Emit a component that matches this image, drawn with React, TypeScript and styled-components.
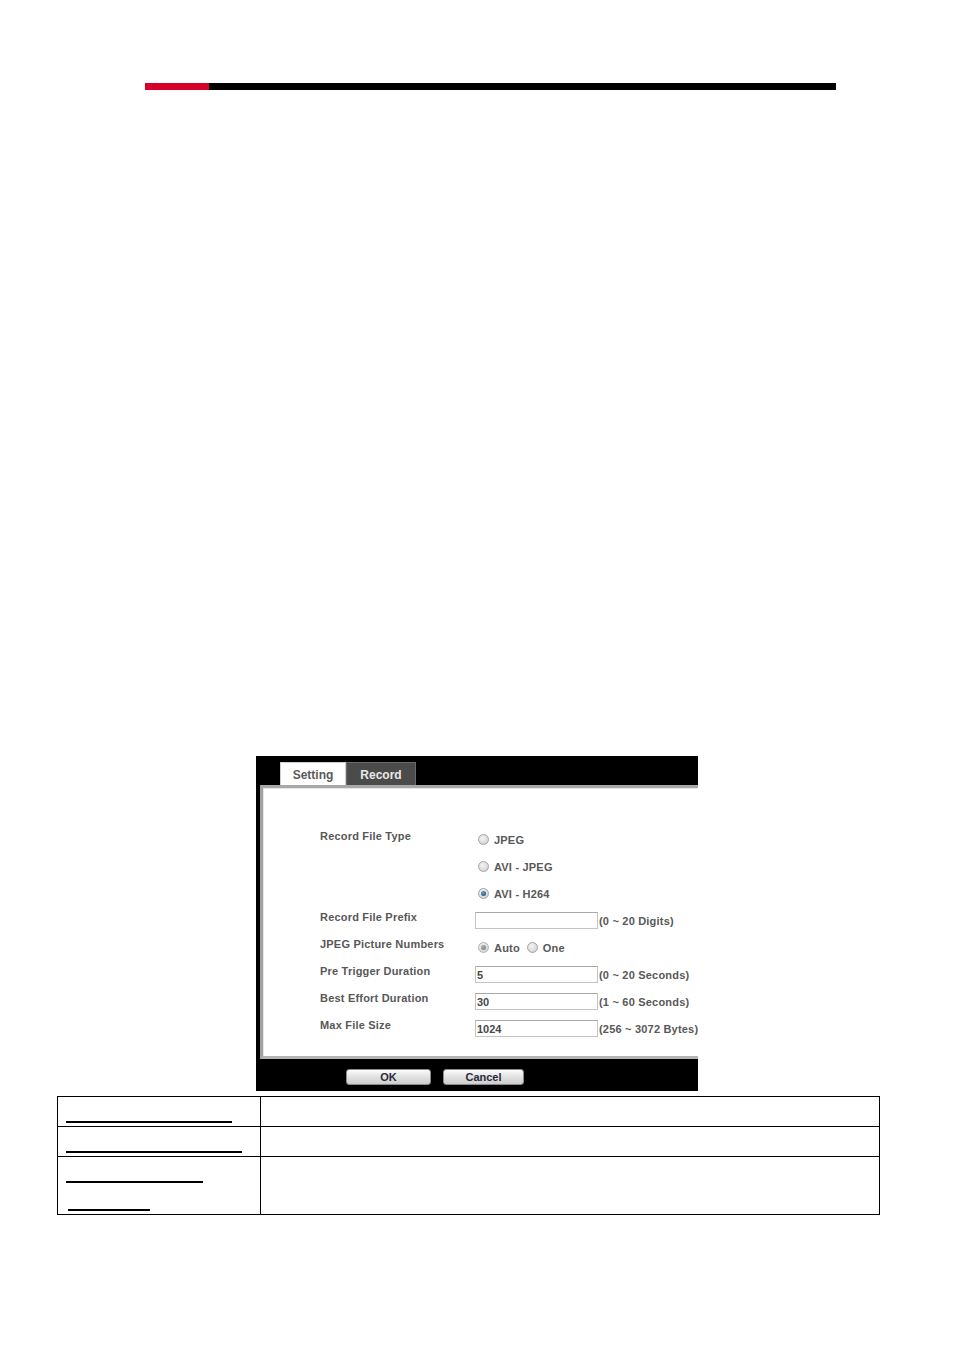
import React from 'react';
import styled, { createGlobalStyle } from 'styled-components';

const GlobalStyle = createGlobalStyle`
  html, body {
    margin: 0;
    padding: 0;
    background: #fff;
  }
  body {
    font-family: "Liberation Sans", Arial, sans-serif;
  }
`;

type Field = {
  label: string;
  value: string;
  hint: string;
};

const fields: Field[] = [
  { label: 'Pre Trigger Duration', value: '5', hint: '(0 ~ 20 Seconds)' },
  { label: 'Best Effort Duration', value: '30', hint: '(1 ~ 60 Seconds)' },
  { label: 'Max File Size', value: '1024', hint: '(256 ~ 3072 Bytes)' },
];

const fileTypes = [
  { label: 'JPEG', checked: false },
  { label: 'AVI - JPEG', checked: false },
  { label: 'AVI - H264', checked: true },
];

const App: React.FC = () => {
  return (
    <Page>
      <GlobalStyle />
      <HeaderBar>
        <RedPart />
        <BlackPart />
      </HeaderBar>

      <Screenshot>
        <TabStrip>
          <Tab $active>Setting</Tab>
          <Tab>Record</Tab>
        </TabStrip>
        <Panel>
          <FormRow>
            <Label>Record File Type</Label>
            <OptionList>
              {fileTypes.map((t) => (
                <OptionLine key={t.label}>
                  <Radio $checked={t.checked} />
                  <OptionText>{t.label}</OptionText>
                </OptionLine>
              ))}
            </OptionList>
          </FormRow>
          <FormRow>
            <Label>Record File Prefix</Label>
            <Value>
              <TextBox />
              <Hint>(0 ~ 20 Digits)</Hint>
            </Value>
          </FormRow>
          <FormRow>
            <Label>JPEG Picture Numbers</Label>
            <Value>
              <Radio $checked $disabled />
              <OptionText>Auto</OptionText>
              <Radio $gap />
              <OptionText>One</OptionText>
            </Value>
          </FormRow>
          {fields.map((f) => (
            <FormRow key={f.label}>
              <Label>{f.label}</Label>
              <Value>
                <TextBox>{f.value}</TextBox>
                <Hint>{f.hint}</Hint>
              </Value>
            </FormRow>
          ))}
        </Panel>
        <ButtonBar>
          <PushButton $width={85}>OK</PushButton>
          <PushButton $width={81}>Cancel</PushButton>
        </ButtonBar>
      </Screenshot>

      <ParamTable>
        <colgroup>
          <col style={{ width: 203 }} />
          <col />
        </colgroup>
        <tbody>
          <tr>
            <NameCell>
              <Blank $width={166} />
            </NameCell>
            <DescCell />
          </tr>
          <tr>
            <NameCell>
              <Blank $width={176} />
            </NameCell>
            <DescCell />
          </tr>
          <TallRow>
            <NameCell>
              <Blank $width={137} />
              <Blank $width={82} $indent={2} />
            </NameCell>
            <DescCell />
          </TallRow>
        </tbody>
      </ParamTable>
    </Page>
  );
};

const Page = styled.div`
  width: 954px;
  min-height: 1350px;
  padding-top: 83px;
  box-sizing: border-box;
  background: #fff;
`;

const HeaderBar = styled.div`
  display: flex;
  margin-left: 145px;
  width: 691px;
  height: 7px;
`;

const RedPart = styled.div`
  width: 64px;
  background: #d6002a;
`;

const BlackPart = styled.div`
  flex: 1;
  background: #000;
`;

const Screenshot = styled.div`
  display: flex;
  flex-direction: column;
  margin-top: 666px;
  margin-left: 256px;
  width: 442px;
  height: 335px;
  background: #000;
  overflow: hidden;
`;

const TabStrip = styled.div`
  display: flex;
  align-items: flex-end;
  height: 29px;
  padding-left: 24px;
  box-sizing: border-box;
`;

const Tab = styled.div<{ $active?: boolean }>`
  display: flex;
  align-items: center;
  justify-content: center;
  width: ${(p) => (p.$active ? 66 : 70)}px;
  height: 23px;
  box-sizing: border-box;
  padding-top: 2px;
  font-size: 12px;
  font-weight: bold;
  background: ${(p) => (p.$active ? '#fff' : '#4b4b4b')};
  color: ${(p) => (p.$active ? '#5a5a5a' : '#e8e8e8')};
  border: 1px solid ${(p) => (p.$active ? '#cfcfcf' : '#6a6a6a')};
  border-bottom: none;
`;

const Panel = styled.div`
  height: 274px;
  margin-left: 4px;
  box-sizing: border-box;
  padding: 38px 0 0 57px;
  background: #fff;
  border-left: 3px solid #a2a2a2;
  border-top: 3px solid #a8a8a8;
  border-bottom: 3px solid #b4b4b4;
  box-shadow: inset 1px 1px 0 #e6e6e6;
`;

const FormRow = styled.div`
  display: flex;
  align-items: flex-start;
`;

const Label = styled.div`
  width: 155px;
  flex-shrink: 0;
  padding-top: 3px;
  font-size: 11px;
  line-height: 14px;
  font-weight: bold;
  letter-spacing: 0.2px;
  color: #585858;
  white-space: nowrap;
`;

const OptionList = styled.div`
  display: flex;
  flex-direction: column;
`;

const OptionLine = styled.div`
  display: flex;
  align-items: center;
  height: 27px;
`;

const Value = styled.div`
  display: flex;
  align-items: center;
  height: 27px;
`;

const Radio = styled.span<{ $checked?: boolean; $disabled?: boolean; $gap?: boolean }>`
  position: relative;
  display: inline-block;
  width: 11px;
  height: 11px;
  box-sizing: border-box;
  margin-left: ${(p) => (p.$gap ? 7 : 3)}px;
  margin-right: 5px;
  border-radius: 50%;
  border: 1px solid ${(p) => (p.$disabled ? '#b4b4b4' : '#a4a4a4')};
  background: radial-gradient(circle at 40% 35%, #f4f4f4 0%, #dedede 55%, #c4c4c4 100%);
  &::after {
    content: '';
    display: ${(p) => (p.$checked ? 'block' : 'none')};
    position: absolute;
    left: 2px;
    top: 2px;
    width: 5px;
    height: 5px;
    border-radius: 50%;
    background: ${(p) =>
      p.$disabled
        ? 'radial-gradient(circle at 40% 35%, #b0b0b0, #767676)'
        : 'radial-gradient(circle at 40% 35%, #6f9ccc, #163a66)'};
  }
`;

const OptionText = styled.span`
  font-size: 11px;
  font-weight: bold;
  letter-spacing: 0.2px;
  color: #585858;
  white-space: nowrap;
`;

const TextBox = styled.div`
  width: 123px;
  height: 17px;
  box-sizing: border-box;
  padding: 1px 1px 0;
  border: 1px solid #c4c4c4;
  border-top-color: #a9a9a9;
  font-size: 11px;
  line-height: 14px;
  font-weight: bold;
  color: #484848;
`;

const Hint = styled.span`
  margin-left: 1px;
  padding-top: 1px;
  font-size: 11px;
  font-weight: bold;
  letter-spacing: 0.2px;
  color: #585858;
  white-space: nowrap;
`;

const ButtonBar = styled.div`
  display: flex;
  gap: 12px;
  padding: 10px 0 0 90px;
`;

const PushButton = styled.div<{ $width: number }>`
  display: flex;
  align-items: center;
  justify-content: center;
  width: ${(p) => p.$width}px;
  height: 16px;
  box-sizing: border-box;
  border: 1px solid #8a8a8a;
  border-radius: 3px;
  background: linear-gradient(#fbfbfb, #e2e2e2 50%, #cdcdcd);
  font-size: 11px;
  font-weight: bold;
  color: #2a2a3a;
`;

const ParamTable = styled.table`
  margin-top: 5px;
  margin-left: 57px;
  width: 823px;
  border-collapse: collapse;
  table-layout: fixed;
  td {
    border: 1px solid #000;
    padding: 0;
    vertical-align: top;
  }
  tr {
    height: 30px;
  }
`;

const TallRow = styled.tr`
  && {
    height: 58px;
  }
`;

const NameCell = styled.td`
  && {
    padding-left: 8px;
  }
`;

const DescCell = styled.td``;

const Blank = styled.span<{ $width: number; $indent?: number }>`
  display: block;
  width: ${(p) => p.$width}px;
  height: 24px;
  margin-left: ${(p) => p.$indent ?? 0}px;
  margin-bottom: 2px;
  border-bottom: 2px solid #000;
`;

export default App;
